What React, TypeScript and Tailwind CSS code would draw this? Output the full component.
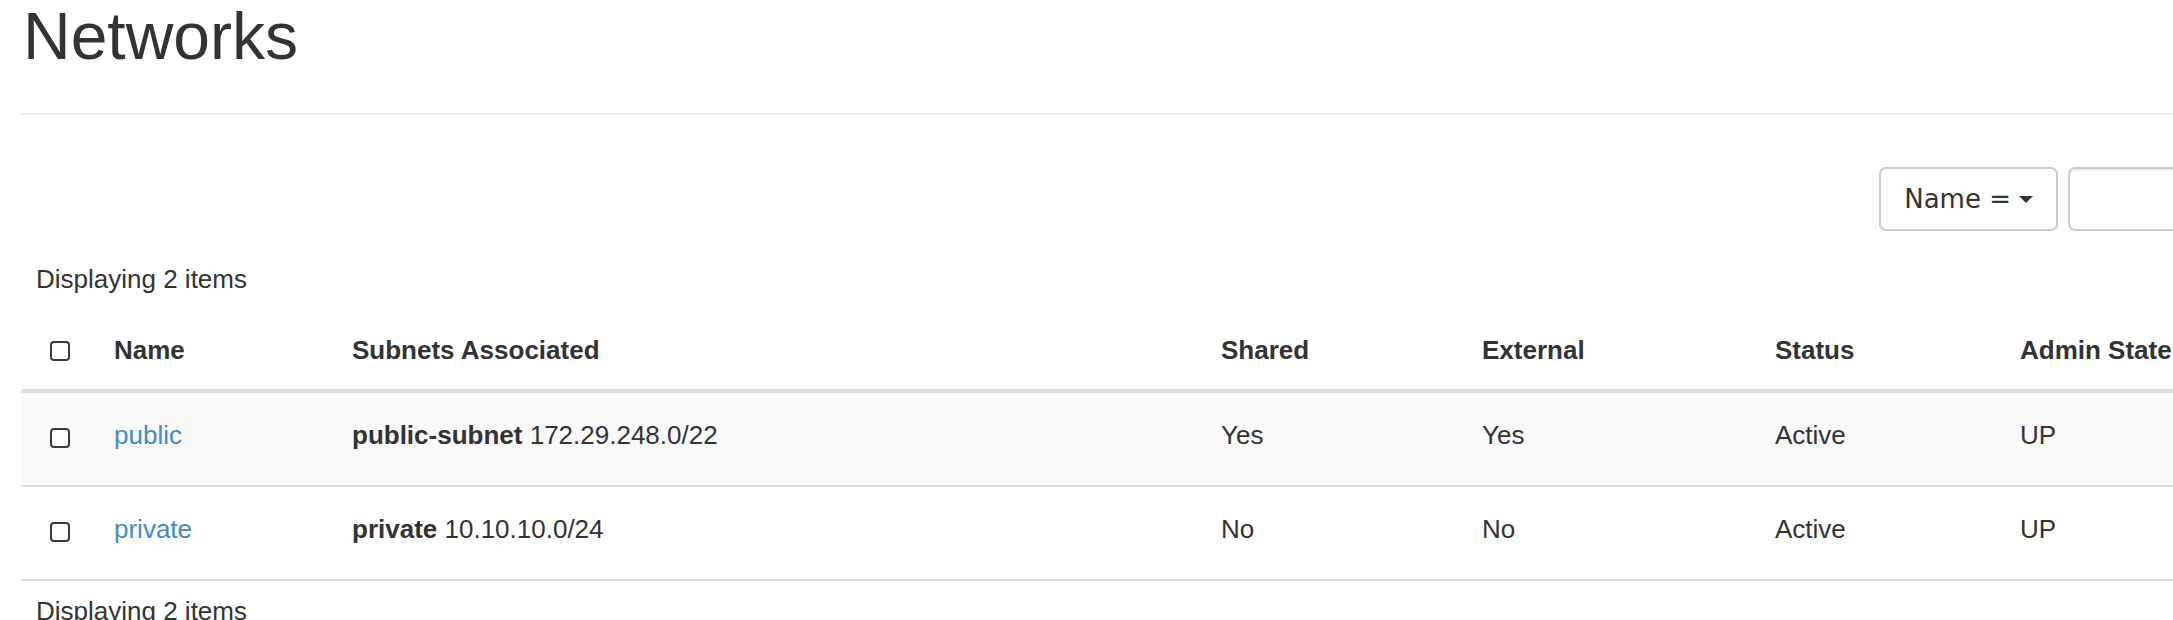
const networks = [
  {
    name: "public",
    subnet: "public-subnet",
    cidr: "172.29.248.0/22",
    shared: "Yes",
    external: "Yes",
    status: "Active",
    admin: "UP",
  },
  {
    name: "private",
    subnet: "private",
    cidr: "10.10.10.0/24",
    shared: "No",
    external: "No",
    status: "Active",
    admin: "UP",
  },
];

function Checkbox() {
  return (
    <span className="block h-[20px] w-[20px] rounded-[4px] border-2 border-[#3b3b3b] bg-white" />
  );
}

export default function App() {
  return (
    <div className="h-[620px] w-[2173px] overflow-hidden bg-white font-['Liberation_Sans',Arial,sans-serif] text-[#333]">
      <div className="w-[2450px] pl-[21px]">
        {/* page header */}
        <h1 className="ml-[2px] text-[66px] font-normal leading-[72px]">
          Networks
        </h1>
        <div className="mt-[41px] h-[2px] bg-[#eee]" />

        {/* filter */}
        <div className="mt-[52px] flex justify-end gap-[10px]">
          <button className="flex h-[64px] items-center rounded-[7px] border-2 border-[#ccc] bg-white px-[23px] font-['DejaVu_Sans',sans-serif] text-[26px] leading-[37px] text-[#333]">
            Name =
            <span className="ml-[8px] h-0 w-0 border-x-[7.5px] border-t-[7px] border-x-transparent border-t-[#333]" />
          </button>
          <input
            type="text"
            className="h-[64px] w-[382px] rounded-[7px] border-2 border-[#ccc] bg-white shadow-[inset_0_2px_2px_rgba(0,0,0,0.075)] outline-none"
          />
        </div>

        <div className="mt-[30px] px-[15px] text-[26px] leading-[37px]">
          Displaying 2 items
        </div>

        {/* table */}
        <table className="w-full table-fixed border-separate border-spacing-0 text-left text-[26px] leading-[37px]">
          <colgroup>
            <col className="w-[78px]" />
            <col className="w-[238px]" />
            <col className="w-[869px]" />
            <col className="w-[261px]" />
            <col className="w-[293px]" />
            <col className="w-[245px]" />
            <col />
          </colgroup>
          <thead>
            <tr>
              <th className="border-b-4 border-[#ddd] pb-[20px] pl-[29px] pt-[34px] align-top">
                <div className="flex h-[37px] items-center">
                  <Checkbox />
                </div>
              </th>
              {["Name", "Subnets Associated", "Shared", "External", "Status", "Admin State"].map((h) => (
                <th
                  key={h}
                  className="whitespace-nowrap border-b-4 border-[#ddd] px-[15px] pb-[20px] pt-[34px] align-top font-bold"
                >
                  {h}
                </th>
              ))}
            </tr>
          </thead>
          <tbody>
            {networks.map((n, i) => (
              <tr key={n.name} className={i % 2 === 0 ? "bg-[#f9f9f9]" : "bg-white"}>
                <td className="border-b-2 border-[#ddd] pb-[29px] pl-[29px] pt-[26px] align-top">
                  <div className="flex h-[37px] items-center">
                    <Checkbox />
                  </div>
                </td>
                <td className="border-b-2 border-[#ddd] px-[15px] pb-[31px] pt-[24px] align-top">
                  <a href="#" className="text-[#428bca]">
                    {n.name}
                  </a>
                </td>
                <td className="whitespace-nowrap border-b-2 border-[#ddd] px-[15px] pb-[31px] pt-[24px] align-top">
                  <b className="font-bold">{n.subnet}</b> {n.cidr}
                </td>
                <td className="border-b-2 border-[#ddd] px-[15px] pb-[31px] pt-[24px] align-top">
                  {n.shared}
                </td>
                <td className="border-b-2 border-[#ddd] px-[15px] pb-[31px] pt-[24px] align-top">
                  {n.external}
                </td>
                <td className="border-b-2 border-[#ddd] px-[15px] pb-[31px] pt-[24px] align-top">
                  {n.status}
                </td>
                <td className="border-b-2 border-[#ddd] px-[15px] pb-[31px] pt-[24px] align-top">
                  {n.admin}
                </td>
              </tr>
            ))}
          </tbody>
        </table>

        <div className="mt-[12px] px-[15px] text-[26px] leading-[37px]">
          Displaying 2 items
        </div>
      </div>
    </div>
  );
}
